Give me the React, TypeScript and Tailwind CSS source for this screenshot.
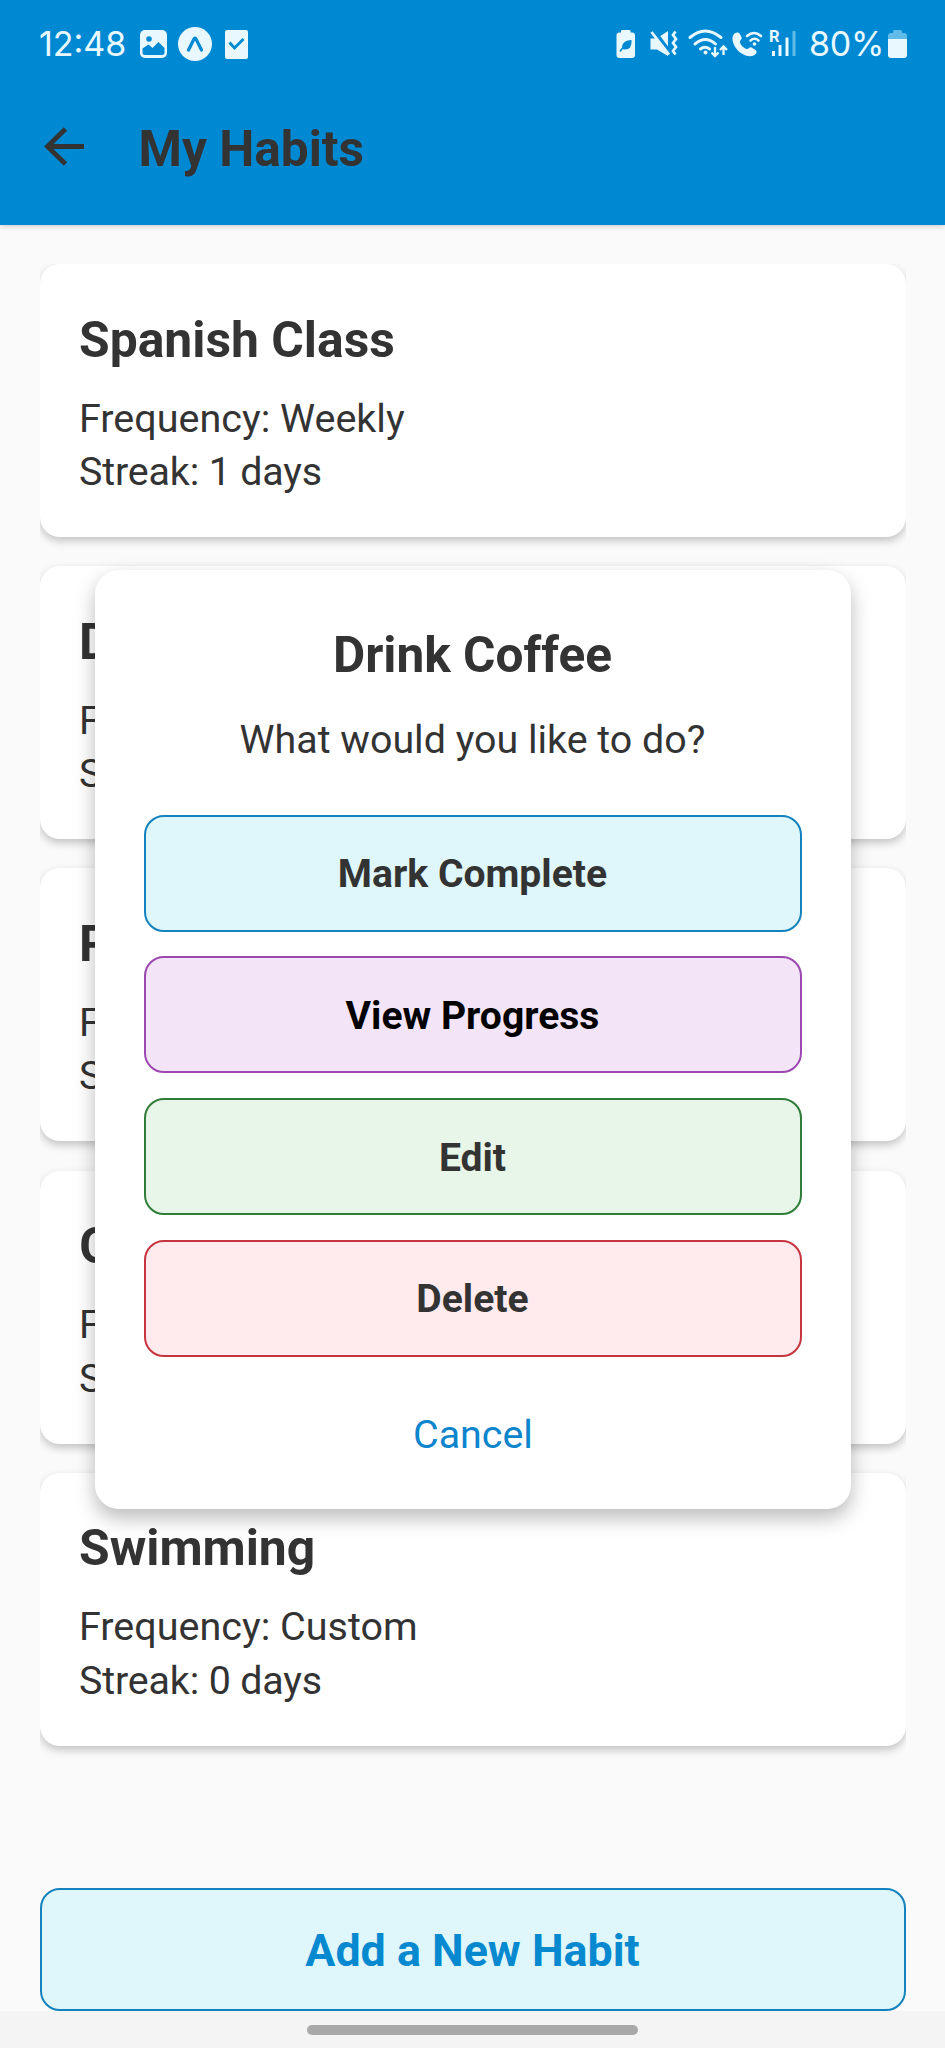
import type { ReactNode } from "react";

interface Habit {
  name: string;
  frequency: string;
  streak: number;
}

const habits: Habit[] = [
  { name: "Spanish Class", frequency: "Weekly", streak: 1 },
  { name: "Drink Coffee", frequency: "Daily", streak: 0 },
  { name: "Read", frequency: "Daily", streak: 0 },
  { name: "Gym", frequency: "Weekly", streak: 0 },
  { name: "Swimming", frequency: "Custom", streak: 0 },
];

function StatusBar() {
  return (
    <div className="flex h-[88px] items-center justify-between pl-[39px] pr-[38px] text-[#e9f8ff]">
      <div className="flex items-center">
        <span className="w-[87px] whitespace-nowrap font-['Inter',sans-serif] text-[34px] leading-[40px]">12:48</span>
        <svg className="ml-[14px] h-[28px] w-[27px]" viewBox="0 0 27 28" fill="none">
          <rect width="27" height="28" rx="5" fill="currentColor" />
          <circle cx="9" cy="9" r="2.8" fill="#0089d3" />
          <path d="M2.500 18.500 8.500 14.500l4 3.500 6-6 6 6v4.500a2.500 2.500 0 0 1-2.500 2.500H5a2.500 2.500 0 0 1-2.500-2.500Z" fill="#0089d3" />
        </svg>
        <svg className="ml-[11px] h-[34px] w-[34px]" viewBox="0 0 34 34" fill="none">
          <circle cx="17" cy="17" r="17" fill="currentColor" />
          <path d="M10.500 23 16 12q1-2 2 0L23.500 23" stroke="#0089d3" strokeWidth="3.200" strokeLinecap="round" />
        </svg>
        <svg className="ml-[13px] h-[29px] w-[23px]" viewBox="0 0 23 29" fill="none">
          <rect width="23" height="29" rx="2" fill="currentColor" />
          <path d="m4.500 12.500 5 5.500L18.500 9" stroke="#0089d3" strokeWidth="2.800" />
        </svg>
      </div>
      <div className="flex items-center">
        <svg className="h-[50px] w-[182px]" viewBox="0 0 182 50" fill="none">
          <path d="M5 13.500V12a1 1 0 0 1 1-1h7.500a1 1 0 0 1 1 1v1.500h1.500a3 3 0 0 1 3 3V36a3 3 0 0 1-3 3H3.500a3 3 0 0 1-3-3V16.500a3 3 0 0 1 3-3Z" fill="currentColor" />
          <path d="M15.500 21c.3 6.500-2 9.500-6.500 9.500-1.500 0-2.500-.5-3-1-.5-5 3-8 9.500-8.500Z" fill="#0089d3" />
          <path d="M4 32.500c1.500-2.500 3-4 5-5" stroke="#0089d3" strokeWidth="1.600" />
          <path d="M34.500 19.500h6l11.500-7.500v25L41 30.500h-6.500Z" fill="currentColor" />
          <path d="m37 11.500 17.500 23.500" stroke="#0089d3" strokeWidth="5" />
          <path d="m35.500 13 17.500 22.500M59.500 12.500 57 16l3 4-3 4 3 4-3 4 2.500 3.500" stroke="currentColor" strokeWidth="2.700" />
          <path d="M74 18.500q15-13 31 0M79 25q10.500-9 20.500 0M84.500 30q4.500-3.500 9 0" stroke="currentColor" strokeWidth="3" strokeLinecap="round" />
          <circle cx="89.500" cy="33.500" r="2" fill="currentColor" />
          <path d="M99 28v9m-3.500-3.500L99 37l3.500-3.500M107.500 36v-8.500m-3.500 3.500 3.500-3.500L111 31" stroke="currentColor" strokeWidth="2.300" />
          <path d="M118.500 14.500c2-1.500 4-1.500 5 0l2 3.500c1 2-2 3.500-1.500 5.500 1 3 3.500 5.500 6.500 6.500 2 .5 3-2.500 5-1.500l4 2.500c2 1.500 1 4-1 5-5 3-13 0-17.500-5.500-4-5-6.500-12-2.500-16Z" fill="currentColor" />
          <path d="M131 17q7-6 14 0M134.500 21.500q4-3.500 8 0" stroke="currentColor" strokeWidth="2.600" strokeLinecap="round" />
          <circle cx="138.500" cy="25" r="1.800" fill="currentColor" />
          <path d="M157.500 32v5M164 26v11M171 18.500v18.500" stroke="currentColor" strokeWidth="3" />
          <path d="M178 12v25" stroke="#60bbe8" strokeWidth="3" />
          <text x="153" y="23" className="fill-current font-['Roboto',sans-serif] text-[16.500px] font-bold">R</text>
        </svg>
        <span className="ml-[11px] w-[74px] whitespace-nowrap font-['Inter',sans-serif] text-[34px] leading-[40px] tracking-[-0.2px]">80%</span>
        <svg className="ml-[5px] h-[28px] w-[19px]" viewBox="0 0 19 28">
          <path d="M5 3V1.500A1.500 1.500 0 0 1 6.500 0h6A1.500 1.500 0 0 1 14 1.500V3h2a3 3 0 0 1 3 3v3H0V6a3 3 0 0 1 3-3Z" fill="#60bbe8" />
          <path d="M0 9h19v16a3 3 0 0 1-3 3H3a3 3 0 0 1-3-3Z" fill="currentColor" />
        </svg>
      </div>
    </div>
  );
}

function Header() {
  return (
    <header className="relative h-[225px] shrink-0 bg-[#0089d3] shadow-[0_1px_6px_rgba(0,0,0,0.2)]">
      <StatusBar />
      <div className="flex h-[118px] items-center pl-[44px]">
        <svg className="h-[40px] w-[42px]" viewBox="0 0 42 40" fill="none" stroke="#333" strokeWidth="4.800">
          <path d="M40 19.500H4M21.500 2 3.500 19.500l18 17.500" />
        </svg>
        <h1 className="ml-[52.500px] pt-[3px] text-[49.600px] font-bold leading-[60px]">My Habits</h1>
      </div>
    </header>
  );
}

function HabitCard({ habit }: { habit: Habit }) {
  return (
    <article className="mb-[29.200px] h-[273px] shrink-0 rounded-[20px] bg-white px-[39.500px] pt-[45.500px] shadow-[0_4px_8px_rgba(0,0,0,0.22)]">
      <h2 className="text-[49.800px] font-bold leading-[60px]">{habit.name}</h2>
      <p className="mt-[22px] text-[39.500px] leading-[53.500px]">Frequency: {habit.frequency}</p>
      <p className="text-[39.400px] leading-[53.500px] tracking-[-0.150px]">Streak: {habit.streak} days</p>
    </article>
  );
}

function ActionButton({ className, children }: { className: string; children: ReactNode }) {
  return (
    <button className={`flex h-[117px] w-full items-center justify-center rounded-[20px] border-2 pt-[3px] text-[39.100px] font-bold ${className}`}>
      {children}
    </button>
  );
}

function HabitDialog() {
  return (
    <section
      role="dialog"
      className="absolute left-[94.500px] top-[569.500px] flex h-[939.500px] w-[756px] flex-col items-center rounded-[24px] bg-white px-[49px] pt-[55.500px] shadow-[0_9px_20px_rgba(0,0,0,0.27)]"
    >
      <h2 className="text-[49.600px] font-bold leading-[60px]">Drink Coffee</h2>
      <p className="mt-[28.500px] text-[39.400px] leading-[52px]">What would you like to do?</p>
      <div className="mt-[49px] flex w-full flex-col gap-[24.700px]">
        <ActionButton className="border-[#1482bd] bg-[#dff7fa]">Mark Complete</ActionButton>
        <ActionButton className="border-[#9b48b0] bg-[#f3e5f7] text-black">View Progress</ActionButton>
        <ActionButton className="border-[#2f7d38] bg-[#e7f6e8]">Edit</ActionButton>
        <ActionButton className="border-[#c6353f] bg-[#ffebed]">Delete</ActionButton>
      </div>
      <button className="mt-[52px] pl-[1px] text-[39.400px] leading-[52px] text-[#0d85cc]">Cancel</button>
    </section>
  );
}

export default function App() {
  return (
    <div className="relative flex h-[2048px] w-[945px] flex-col overflow-hidden bg-[#fafafa] font-['Roboto',sans-serif] text-[#333]">
      <Header />
      <main className="mx-[39.500px] mt-[39px] flex min-h-0 grow flex-col overflow-hidden">
        {habits.map((habit) => (
          <HabitCard key={habit.name} habit={habit} />
        ))}
      </main>
      <button className="mx-[39.500px] flex h-[123px] shrink-0 items-center justify-center rounded-[20px] border-2 border-[#1482bd] bg-[#dff7fa] pt-[3px] text-[44.800px] font-bold text-[#0789d0]">
        Add a New Habit
      </button>
      <footer className="flex h-[37px] shrink-0 justify-center bg-[#f4f4f4] pt-[14px]">
        <div className="h-[10px] w-[331px] rounded-full bg-[#a9a9a9]" />
      </footer>
      <HabitDialog />
    </div>
  );
}
